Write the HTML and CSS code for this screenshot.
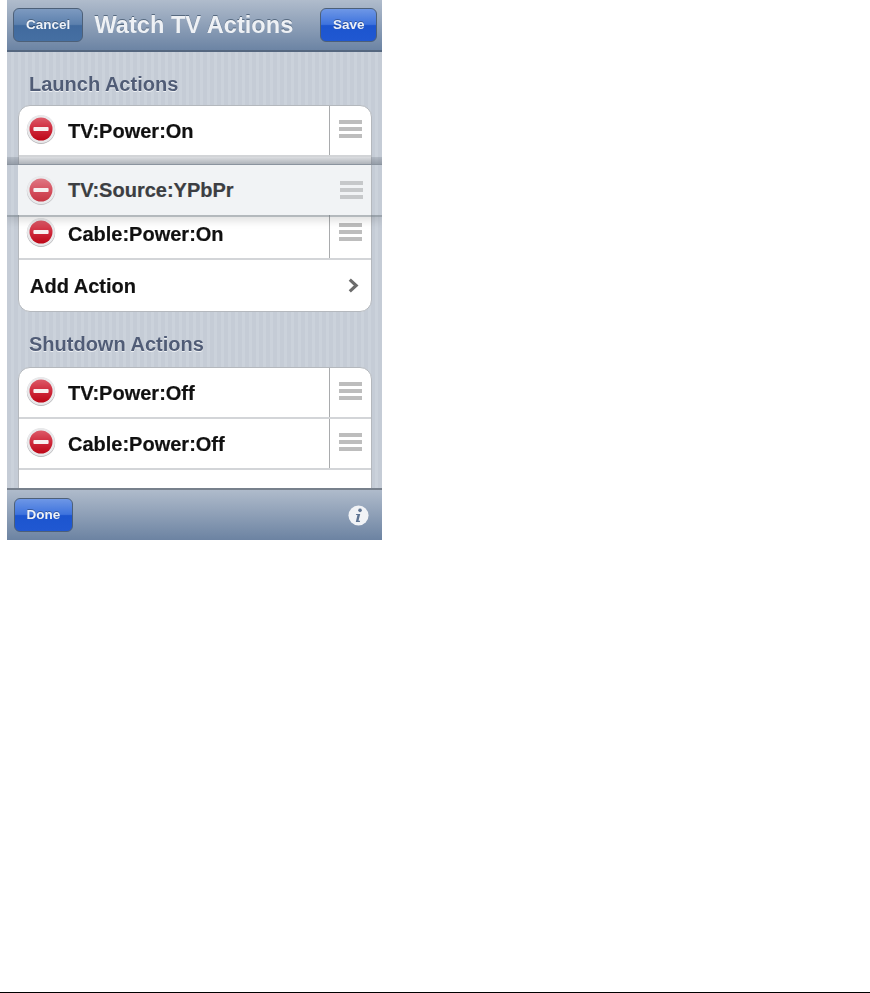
FILE: index.html
```html
<!DOCTYPE html>
<html lang="en">
<head>
    <meta charset="UTF-8">
    <title>Watch TV Actions</title>
    <link rel="stylesheet" href="styles.css">
</head>
<body>
    <div class="page">
        <div class="phone">
            <div class="navbar">
                <a class="btn btn-dark">Cancel</a>
                <h1>Watch TV Actions</h1>
                <a class="btn btn-blue">Save</a>
            </div>

            <div class="content">
                <h2>Launch Actions</h2>
                <div class="group">
                    <div class="row">
                        <svg class="del" viewBox="0 0 30 30"><use href="#del-icon"/></svg>
                        <span class="label">TV:Power:On</span>
                        <span class="grip"><i></i><i></i><i></i></span>
                    </div>
                    <div class="row row-gap"></div>
                    <div class="row">
                        <svg class="del" viewBox="0 0 30 30"><use href="#del-icon"/></svg>
                        <span class="label">Cable:Power:On</span>
                        <span class="grip"><i></i><i></i><i></i></span>
                    </div>
                    <div class="row">
                        <span class="label label-add">Add Action</span>
                        <svg class="chevron" viewBox="0 0 12 16"><path d="M2.5 2.5 8.5 8l-6 5.5"/></svg>
                    </div>
                </div>

                <h2>Shutdown Actions</h2>
                <div class="group">
                    <div class="row">
                        <svg class="del" viewBox="0 0 30 30"><use href="#del-icon"/></svg>
                        <span class="label">TV:Power:Off</span>
                        <span class="grip"><i></i><i></i><i></i></span>
                    </div>
                    <div class="row">
                        <svg class="del" viewBox="0 0 30 30"><use href="#del-icon"/></svg>
                        <span class="label">Cable:Power:Off</span>
                        <span class="grip"><i></i><i></i><i></i></span>
                    </div>
                    <div class="row"></div>
                </div>

                <!-- row being dragged, floats over the list -->
                <div class="drag-band">
                    <div class="row row-drag">
                        <svg class="del" viewBox="0 0 30 30"><use href="#del-icon"/></svg>
                        <span class="label">TV:Source:YPbPr</span>
                        <span class="grip"><i></i><i></i><i></i></span>
                    </div>
                </div>
            </div>

            <div class="toolbar">
                <a class="btn btn-blue">Done</a>
                <svg class="info" viewBox="0 0 24 24">
                    <circle cx="12" cy="12" r="10.5" fill="#f1f3f6"/>
                    <circle cx="13.6" cy="6.6" r="1.9" fill="#5f7593"/>
                    <path d="M9.6 10.4h4.2l-1.8 7.2h1.7l-.3 1.2H9.2l1.7-7.2H9.3z" fill="#5f7593"/>
                </svg>
            </div>
        </div>
        <div class="spacer"></div>
        <div class="bottom-line"></div>
    </div>

    <svg class="defs" width="0" height="0">
        <defs>
            <linearGradient id="red" x1="0" y1="0" x2="0" y2="1">
                <stop offset="0" stop-color="#dc5a68"/>
                <stop offset="0.5" stop-color="#cf2a3c"/>
                <stop offset="1" stop-color="#bd0616"/>
            </linearGradient>
            <g id="del-icon">
                <circle cx="15" cy="15.8" r="14.2" fill="#b9b9bc"/>
                <circle cx="15" cy="15" r="14" fill="#e9e9eb"/>
                <circle cx="15" cy="15" r="11.5" fill="url(#red)"/>
                <rect x="7.4" y="13" width="15.2" height="4" rx="1" fill="#f8f0f0"/>
            </g>
        </defs>
    </svg>
</body>
</html>
```

FILE: styles.css
```css
* {
    margin: 0;
    padding: 0;
    box-sizing: border-box;
}

body {
    font-family: "Liberation Sans", Arial, sans-serif;
    background: #fff;
}

.page {
    height: 993px;
    display: flex;
    flex-direction: column;
    overflow: hidden;
}

.phone {
    width: 375px;
    height: 540px;
    margin-left: 7px;
    display: flex;
    flex-direction: column;
    overflow: hidden;
    filter: blur(0.6px);
}

.spacer {
    flex: 1;
}

.bottom-line {
    height: 1px;
    background: #000;
}

.defs {
    position: absolute;
}

/* top bar */
.navbar {
    height: 52px;
    flex-shrink: 0;
    display: flex;
    align-items: center;
    justify-content: space-between;
    padding: 0 5px 0 6px;
    background: linear-gradient(#b0bccc, #6c84a4);
    border-bottom: 2px solid #55677f;
}

.navbar h1 {
    margin-right: 16px;
    font-size: 23.6px;
    font-weight: bold;
    color: #eef1f5;
    text-shadow: 0 -1px 0 #56697f;
}

.btn {
    display: block;
    height: 34px;
    line-height: 32px;
    padding: 0 12px;
    font-size: 13.5px;
    font-weight: bold;
    color: #eef2f8;
    text-shadow: 0 -1px 0 rgba(0, 0, 0, 0.3);
    border-radius: 6px;
    border: 1px solid #4d6078;
}

.btn-dark {
    background: linear-gradient(#7d9ac0 0%, #5c80ad 48%, #416a9e 52%, #456fa2 100%);
}

.btn-blue {
    padding: 0 11.5px;
    background: linear-gradient(#6e97e6 0%, #3e73dd 48%, #1c55cf 52%, #2058d2 100%);
}

/* list area */
.content {
    flex: 1;
    position: relative;
    overflow: hidden;
    padding: 0 10px 0 11px;
    background: repeating-linear-gradient(90deg, #c5ccd6 0, #c5ccd6 4px, #cbd2db 4px, #cbd2db 7px);
}

.content h2 {
    height: 53px;
    padding: 21px 0 0 11px;
    font-size: 20px;
    line-height: 22px;
    font-weight: bold;
    color: #505c76;
    text-shadow: 0 1px 0 rgba(255, 255, 255, 0.7);
}

.group {
    background: #fff;
    border: 1px solid #b4b8bd;
    border-radius: 12px;
    overflow: hidden;
    margin-bottom: 2px;
}

.content .group + h2 {
    padding-top: 19px;
}

.row {
    height: 51px;
    display: flex;
    align-items: center;
    border-bottom: 2px solid #d3d5d8;
}

.row-gap {
    height: 52px;
}

.row:last-child {
    border-bottom: 0;
}

.del {
    width: 30px;
    height: 30px;
    margin: -3px 12px 0 7px;
    flex-shrink: 0;
}

.label {
    flex: 1;
    padding-top: 1px;
    font-size: 20px;
    font-weight: bold;
    color: #111;
    -webkit-text-stroke: 0.2px #111;
}

.label-add {
    padding-left: 11px;
}

.grip {
    width: 42px;
    align-self: stretch;
    border-left: 1px solid #a9abad;
    display: flex;
    flex-direction: column;
    justify-content: center;
    gap: 3px;
    padding: 0 0 3px 9px;
}

.grip i {
    display: block;
    width: 23px;
    height: 4px;
    background: #bdbdbd;
}

.chevron {
    width: 13px;
    height: 17px;
    margin-right: 11px;
    fill: none;
    stroke: #6c6c6c;
    stroke-width: 3;
}

/* floating drag row */
.drag-band {
    position: absolute;
    left: 0;
    right: 0;
    top: 105px;
    height: 58px;
    padding: 8px 11px 0;
    background: linear-gradient(rgba(110, 118, 130, 0.25) 0, rgba(110, 118, 130, 0.55) 7px, #8a939e 7px, #8a939e 8px, transparent 8px);
    box-shadow: 0 2px 0 rgba(120, 130, 140, 0.45), 0 6px 8px rgba(0, 0, 0, 0.12);
}

.row-drag {
    height: 50px;
    border: 0;
    background: #f1f3f5;
    padding-left: 1px;
}

.row-drag .label {
    color: #3c3e42;
    -webkit-text-stroke-color: #3c3e42;
}

.row-drag .del {
    margin-top: 0;
    opacity: 0.8;
}

.row-drag .grip {
    border-left: 0;
    padding: 0 0 1px 11px;
}

.row-drag .grip i {
    background: #c6c8ca;
}

.toolbar {
    height: 52px;
    flex-shrink: 0;
    display: flex;
    align-items: center;
    justify-content: space-between;
    padding: 0 12px 0 7px;
    background: linear-gradient(#afbbcb, #6c83a2);
    border-top: 2px solid #77808c;
}

.info {
    width: 23px;
    height: 23px;
}
```
